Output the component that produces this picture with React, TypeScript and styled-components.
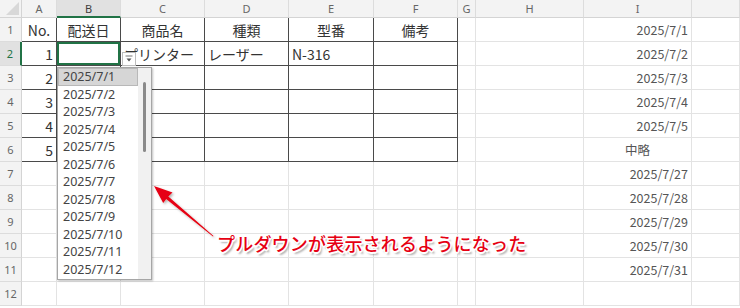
import * as React from 'react';
import styled, { createGlobalStyle, css } from 'styled-components';

const GlobalStyle = createGlobalStyle`
  * { box-sizing: border-box; }
  html, body { margin: 0; background: #fff; overflow: hidden; }
  body { font-family: "Noto Sans CJK JP", "Noto Sans", sans-serif; }
`;

const GREEN = '#217346';
const DARK = '#4a4a4a';
const GRID = '#e3e3e3';

const cols = ['A', 'B', 'C', 'D', 'E', 'F', 'G', 'H', 'I', ''];
const dates = [
  '2025/7/1', '2025/7/2', '2025/7/3', '2025/7/4', '2025/7/5', '中略',
  '2025/7/27', '2025/7/28', '2025/7/29', '2025/7/30', '2025/7/31', '',
];
const listItems = Array.from({ length: 12 }, (_, i) => `2025/7/${i + 1}`);

type Align = 'left' | 'center' | 'right';

const Sheet = styled.div`
  position: relative;
  display: grid;
  grid-template-columns: 22px 35px 64px 84px 84px 85px 84px 18px 108px 108px 48px;
  grid-template-rows: 18px repeat(12, 24px);
  width: 740px;
  height: 308px;
  overflow: hidden;
`;

const Corner = styled.div`
  position: relative;
  background: #f3f3f3;
  border-right: 1px solid #d4d4d4;
  border-bottom: 1px solid #d4d4d4;
  &::after {
    content: '';
    position: absolute;
    right: 2px;
    bottom: 2px;
    border-left: 13px solid transparent;
    border-bottom: 13px solid #d8d8d8;
  }
`;

const ColHead = styled.div<{ $active?: boolean }>`
  display: flex;
  align-items: center;
  justify-content: center;
  font-family: "Noto Sans", sans-serif;
  font-size: 11px;
  color: ${(p) => (p.$active ? '#3d3d3d' : '#666')};
  background: ${(p) => (p.$active ? '#e1e1e1' : '#f3f3f3')};
  border-right: 1px solid #dcdcdc;
  border-bottom: ${(p) => (p.$active ? `2px solid ${GREEN}` : '1px solid #d4d4d4')};
`;

const RowHead = styled.div<{ $active?: boolean }>`
  display: flex;
  align-items: center;
  justify-content: center;
  font-family: "Noto Sans", sans-serif;
  font-size: 11px;
  color: ${(p) => (p.$active ? GREEN : '#666')};
  background: ${(p) => (p.$active ? '#e1e1e1' : '#f3f3f3')};
  border-bottom: 1px solid #dcdcdc;
  border-right: ${(p) => (p.$active ? `2px solid ${GREEN}` : '1px solid #d4d4d4')};
`;

const Cell = styled.div<{ $boxed?: boolean; $align?: Align; $small?: boolean; $selected?: boolean }>`
  display: flex;
  align-items: center;
  justify-content: ${(p) =>
    p.$align === 'right' ? 'flex-end' : p.$align === 'center' ? 'center' : 'flex-start'};
  padding: 0 3px;
  white-space: nowrap;
  overflow: visible;
  font-size: ${(p) => (p.$small ? '12.5px' : '14px')};
  color: ${(p) => (p.$small ? '#555' : '#333')};
  border-right: 1px solid ${(p) => (p.$boxed ? DARK : GRID)};
  border-bottom: 1px solid ${(p) => (p.$boxed ? DARK : GRID)};
  ${(p) =>
    p.$selected &&
    css`
      box-shadow: inset 0 0 0 2px ${GREEN};
    `}
`;

const DropButton = styled.div`
  position: absolute;
  left: 122px;
  top: 52px;
  width: 14px;
  height: 14px;
  background: #fff;
  border: 1px solid #bdbdbd;
  display: flex;
  align-items: center;
  justify-content: center;
`;

const DropList = styled.div`
  position: absolute;
  left: 57px;
  top: 67px;
  width: 95px;
  height: 213px;
  display: flex;
  background: #fff;
  border: 1px solid #a6a6a6;
  box-shadow: 1px 1px 2px rgba(0, 0, 0, 0.25);
`;

const Items = styled.div`
  flex: 1;
  display: flex;
  flex-direction: column;
`;

const Item = styled.div<{ $hot?: boolean }>`
  height: 17.5px;
  display: flex;
  align-items: center;
  padding-left: 4px;
  font-family: "Noto Sans", sans-serif;
  font-size: 12.5px;
  color: #444;
  background: ${(p) => (p.$hot ? '#d6d6d6' : '#fff')};
  border: 1px solid ${(p) => (p.$hot ? '#b8b8b8' : 'transparent')};
`;

const ScrollTrack = styled.div`
  width: 13px;
  background: #f1f1f1;
  display: flex;
  justify-content: center;
  padding-top: 14px;
`;

const Thumb = styled.div`
  width: 3px;
  height: 70px;
  border-radius: 2px;
  background: #8a8a8a;
`;

const Note = styled.div`
  position: absolute;
  left: 217px;
  top: 230px;
  font-size: 18px;
  font-weight: 500;
  letter-spacing: 0.2px;
  color: #e60012;
  white-space: nowrap;
  text-shadow:
    1.5px 0 0 #fff, -1.5px 0 0 #fff, 0 1.5px 0 #fff, 0 -1.5px 0 #fff,
    1px 1px 0 #fff, -1px -1px 0 #fff, 1px -1px 0 #fff, -1px 1px 0 #fff,
    2px 2.5px 2px rgba(0, 0, 0, 0.35);
`;

const Overlay = styled.svg`
  position: absolute;
  left: 0;
  top: 0;
  pointer-events: none;
`;

const tableHead = ['No.', '配送日', '商品名', '種類', '型番', '備考'];

const renderRow = (r: number) => {
  const cells: React.ReactNode[] = [];
  const inTable = r <= 6;
  for (let c = 0; c < 10; c++) {
    const boxed = inTable && c < 6;
    let text = '';
    let align: Align = 'left';
    let small = false;
    if (r === 1 && c < 6) {
      text = tableHead[c];
      align = 'center';
    } else if (c === 0 && r >= 2 && r <= 6) {
      text = String(r - 1);
      align = 'right';
    } else if (r === 2 && c === 2) text = 'プリンター';
    else if (r === 2 && c === 3) text = 'レーザー';
    else if (r === 2 && c === 4) text = 'N-316';
    else if (c === 8) {
      text = dates[r - 1];
      align = r === 6 ? 'center' : 'right';
      small = true;
    }
    cells.push(
      <Cell
        key={`${r}-${c}`}
        $boxed={boxed}
        $align={align}
        $small={small}
        $selected={r === 2 && c === 1}
      >
        {text}
      </Cell>
    );
  }
  return cells;
};

const App: React.FC = () => {
  const tip = { x: 154, y: 186 };
  return (
    <>
      <GlobalStyle />
      <Sheet>
        <Corner />
        {cols.map((c, i) => (
          <ColHead key={i} $active={c === 'B'}>
            {c}
          </ColHead>
        ))}
        {Array.from({ length: 12 }, (_, i) => (
          <React.Fragment key={i}>
            <RowHead $active={i === 1}>{i + 1}</RowHead>
            {renderRow(i + 1)}
          </React.Fragment>
        ))}

        <DropButton>
          <svg width="8" height="8" viewBox="0 0 8 8">
            <rect x="0.5" y="0.5" width="7" height="1" fill="#777" />
            <path d="M1.5 3.5 L6.5 3.5 L4 6.5 Z" fill="#555" />
          </svg>
        </DropButton>

        <DropList>
          <Items>
            {listItems.map((d, i) => (
              <Item key={d} $hot={i === 0}>
                {d}
              </Item>
            ))}
          </Items>
          <ScrollTrack>
            <Thumb />
          </ScrollTrack>
        </DropList>

        <Overlay width="740" height="308" viewBox="0 0 740 308">
          <defs>
            <filter id="sh" x="-20%" y="-20%" width="140%" height="140%">
              <feDropShadow dx="1.5" dy="1.5" stdDeviation="1" floodColor="#000" floodOpacity="0.3" />
            </filter>
          </defs>
          <polygon
            filter="url(#sh)"
            fill="#e60012"
            points={`${tip.x},${tip.y} 172.5,192.5 168.3,196.5 213.5,236 213,236.6 166.2,199 163.2,203`}
          />
        </Overlay>
        <Note>プルダウンが表示されるようになった</Note>
      </Sheet>
    </>
  );
};

export default App;
